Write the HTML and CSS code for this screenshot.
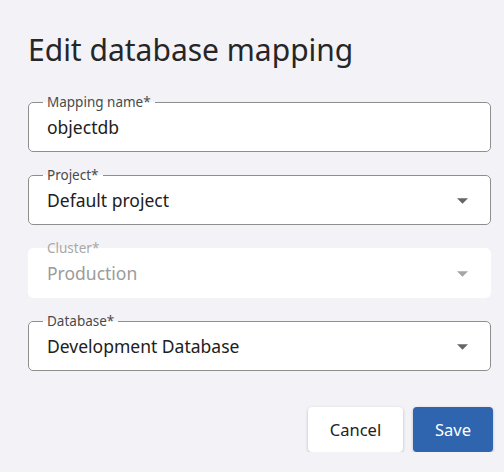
FILE: index.html
```html
<!DOCTYPE html>
<html lang="en">
<head>
    <meta charset="UTF-8">
    <title>Edit database mapping</title>
    <link rel="stylesheet" href="styles.css">
</head>
<body>
    <div class="dialog">
        <h1>Edit database mapping</h1>

        <fieldset class="field">
            <legend>Mapping name*</legend>
            <div class="value">objectdb</div>
        </fieldset>

        <fieldset class="field select">
            <legend>Project*</legend>
            <div class="value">Default project</div>
            <svg class="arrow" viewBox="0 0 10 5"><path d="M0 0l5 5 5-5z"/></svg>
        </fieldset>

        <fieldset class="field select disabled">
            <legend>Cluster*</legend>
            <div class="value">Production</div>
            <svg class="arrow" viewBox="0 0 10 5"><path d="M0 0l5 5 5-5z"/></svg>
        </fieldset>

        <fieldset class="field select">
            <legend>Database*</legend>
            <div class="value">Development Database</div>
            <svg class="arrow" viewBox="0 0 10 5"><path d="M0 0l5 5 5-5z"/></svg>
        </fieldset>

        <div class="actions">
            <button class="btn">Cancel</button>
            <button class="btn primary">Save</button>
        </div>
    </div>
</body>
</html>
```

FILE: styles.css
```css
body {
    margin: 0;
    background: #f3f2f7;
    font-family: 'Noto Sans', 'Open Sans', sans-serif;
    color: #222;
}

.dialog {
    padding: 30px 13px 0 28px;
}

h1 {
    margin: 0 0 24px;
    font-size: 30px;
    line-height: 40px;
    font-weight: 400;
    color: #262626;
}

.field {
    margin: 0 0 15px 0;
    padding: 5px 18px 12px 18px;
    border: 1px solid #8e8e8e;
    border-radius: 5px;
    background: #fff;
    display: flex;
    align-items: center;
}

.field legend {
    margin-left: -4px;
    padding: 0 4px;
    font-size: 13.5px;
    line-height: 16px;
    color: #4a4a4a;
}

.field .value {
    flex: 1;
    font-size: 17.5px;
    line-height: 24px;
    color: #202020;
}

.field .arrow {
    width: 11px;
    height: 6px;
    margin-right: 4px;
    margin-top: 2px;
    fill: #666;
}

.field.disabled {
    border-color: transparent;
}

.field.disabled legend {
    color: #a8a8a8;
}

.field.disabled .value {
    color: #9b9b9b;
}

.field.disabled .arrow {
    fill: #a5a5a5;
}

.actions {
    display: flex;
    justify-content: flex-end;
    gap: 10px;
    margin-top: 36px;
    margin-right: -2px;
}

.btn {
    height: 45px;
    min-width: 95px;
    padding: 0 21px;
    font-family: inherit;
    font-size: 16.5px;
    color: #222;
    background: #fff;
    border: none;
    border-radius: 4px;
    box-shadow: 0 1px 3px rgba(0, 0, 0, 0.25);
    cursor: pointer;
}

.btn.primary {
    min-width: 80px;
    background: #2f64ae;
    color: #fff;
}
```
